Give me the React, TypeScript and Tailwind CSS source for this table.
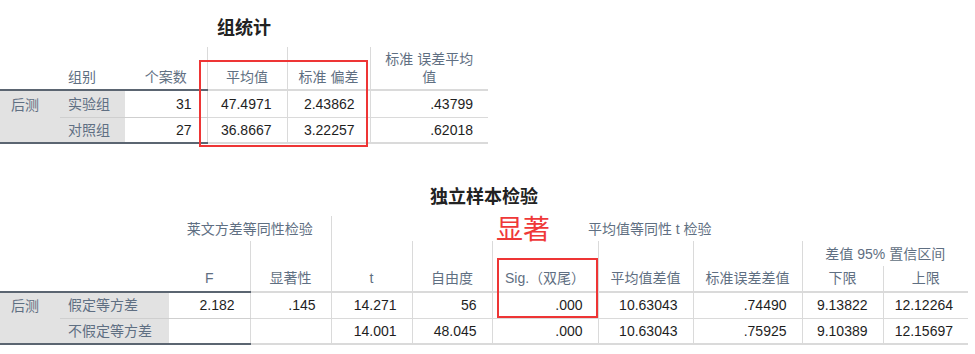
import React from 'react';

const font = "font-['Liberation_Sans','Noto_Sans_CJK_SC',sans-serif]";
const hd = 'font-normal text-[14px] text-[#5f6f82] leading-[18px]';
const num = 'text-right pr-[15px] text-[14px] text-[#1e1e1e] leading-[18px]';
const lab = 'bg-[#e2e2e2] text-left pl-[8px] text-[14px] text-[#5f6f82] leading-[18px]';
const vl = 'border-l border-[#dadada]';
const heavy = 'border-b-2 border-[#5b6571]';
const light = 'border-b border-[#cfcfcf]';

function GroupStats() {
  return (
    <div className="w-[488px]">
      <div className="h-[47px] flex items-center justify-center pt-[9px] text-[18px] font-bold text-[#222]">组统计</div>
      <table className="w-[488px] table-fixed border-collapse">
        <colgroup>
          <col className="w-[60px]" />
          <col className="w-[65px]" />
          <col className="w-[82px]" />
          <col className="w-[80px]" />
          <col className="w-[83px]" />
          <col className="w-[118px]" />
        </colgroup>
        <thead>
          <tr className="h-[43px]">
            <th className={heavy}></th>
            <th className={`${hd} ${heavy} text-left pl-[8px] align-bottom pb-[3px]`}>组别</th>
            <th className={`${hd} ${heavy} text-center align-bottom pb-[3px]`}>个案数</th>
            <th className={`${hd} ${heavy} ${vl} text-center align-bottom pb-[3px]`}>平均值</th>
            <th className={`${hd} ${heavy} ${vl} text-center align-bottom pb-[3px]`}>标准 偏差</th>
            <th className={`${hd} ${heavy} ${vl} text-center align-bottom pb-[3px]`}>
              标准 误差平均
              <br />
              值
            </th>
          </tr>
        </thead>
        <tbody>
          <tr className="h-[27px]">
            <td rowSpan={2} className={`${lab} pl-[11px] align-top pt-[5px] ${heavy}`}>后测</td>
            <td className={`${lab} ${light}`}>实验组</td>
            <td className={`${num} ${light}`}>31</td>
            <td className={`${num} ${light} ${vl}`}>47.4971</td>
            <td className={`${num} ${light} ${vl}`}>2.43862</td>
            <td className={`${num} ${light} ${vl}`}>.43799</td>
          </tr>
          <tr className="h-[26px]">
            <td className={`${lab} ${heavy}`}>对照组</td>
            <td className={`${num} ${heavy}`}>27</td>
            <td className={`${num} ${heavy} ${vl}`}>36.8667</td>
            <td className={`${num} ${heavy} ${vl}`}>3.22257</td>
            <td className={`${num} ${heavy} ${vl}`}>.62018</td>
          </tr>
        </tbody>
      </table>
    </div>
  );
}

function IndependentTest() {
  const rows = [
    ['假定等方差', '2.182', '.145', '14.271', '56', '.000', '10.63043', '.74490', '9.13822', '12.12264'],
    ['不假定等方差', '', '', '14.001', '48.045', '.000', '10.63043', '.75925', '9.10389', '12.15697'],
  ];
  const cols = [60, 109, 81, 81, 81, 80, 106, 95, 109, 81, 85];
  return (
    <div className="w-[968px]">
      <div className="h-[72px] flex items-end justify-center pb-[5px] text-[18px] font-bold text-[#222]">独立样本检验</div>
      <table className="w-[968px] table-fixed border-collapse">
        <colgroup>
          {cols.map((w, i) => (
            <col key={i} style={{ width: w }} />
          ))}
        </colgroup>
        <thead>
          <tr className="h-[25px]">
            <th colSpan={2}></th>
            <th colSpan={2} className={`${hd} text-center`}>莱文方差等同性检验</th>
            <th colSpan={7} className={`${hd} ${vl} text-center`}>平均值等同性 t 检验</th>
          </tr>
          <tr className="h-[25px]">
            <th colSpan={2} rowSpan={2} className={heavy}></th>
            <th rowSpan={2} className={`${hd} ${heavy} text-center align-bottom pb-[4px]`}>F</th>
            <th rowSpan={2} className={`${hd} ${heavy} ${vl} text-center align-bottom pb-[4px]`}>显著性</th>
            <th rowSpan={2} className={`${hd} ${heavy} ${vl} text-center align-bottom pb-[4px]`}>t</th>
            <th rowSpan={2} className={`${hd} ${heavy} ${vl} text-center align-bottom pb-[4px]`}>自由度</th>
            <th rowSpan={2} className={`${hd} ${heavy} ${vl} text-center align-bottom pb-[4px]`}>Sig.（双尾）</th>
            <th rowSpan={2} className={`${hd} ${heavy} ${vl} text-center align-bottom pb-[4px]`}>平均值差值</th>
            <th rowSpan={2} className={`${hd} ${heavy} ${vl} text-center align-bottom pb-[4px]`}>标准误差差值</th>
            <th colSpan={2} className={`${hd} ${vl} text-center`}>差值 95% 置信区间</th>
          </tr>
          <tr className="h-[26px]">
            <th className={`${hd} ${heavy} ${vl} text-center align-bottom pb-[4px]`}>下限</th>
            <th className={`${hd} ${heavy} ${vl} text-center align-bottom pb-[4px]`}>上限</th>
          </tr>
        </thead>
        <tbody>
          {rows.map((r, ri) => {
            const line = ri === 0 ? light : heavy;
            return (
              <tr key={ri} className="h-[26px]">
                {ri === 0 && (
                  <td rowSpan={2} className={`${lab} pl-[11px] align-top pt-[4px] ${heavy}`}>后测</td>
                )}
                <td className={`${lab} ${line}`}>{r[0]}</td>
                {r.slice(1).map((v, ci) => (
                  <td key={ci} className={`${num} ${line} ${ci > 0 ? vl : ''}`}>{v}</td>
                ))}
              </tr>
            );
          })}
        </tbody>
      </table>
    </div>
  );
}

export default function App() {
  return (
    <div className={`relative w-[975px] h-[354px] bg-white ${font}`}>
      <GroupStats />
      <IndependentTest />
      <div className="absolute left-[199px] top-[60px] w-[169px] h-[87px] border-2 border-[#ee3535]"></div>
      <div className="absolute left-[496px] top-[214px] text-[27px] leading-[32px] text-[#ef3838]">显著</div>
      <div className="absolute left-[497px] top-[258px] w-[101px] h-[60px] border-2 border-[#ee3535]"></div>
    </div>
  );
}
